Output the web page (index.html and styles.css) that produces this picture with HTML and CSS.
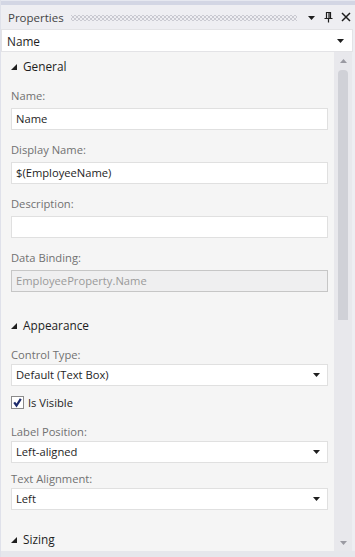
FILE: index.html
```html
<!DOCTYPE html>
<html lang="en">
<head>
  <meta charset="UTF-8">
  <title>Properties</title>
  <link rel="stylesheet" href="styles.css">
</head>
<body>
  <div class="panel">
    <div class="top-strip"></div>

    <div class="title-bar">
      <span class="title">Properties</span>
      <span class="grip"></span>
      <span class="title-icons">
        <svg width="9" height="6" viewBox="0 0 9 6"><polygon points="1,1 8,1 4.5,5" fill="#1e1e1e"/></svg>
        <svg width="9" height="12" viewBox="0 0 9 12"><path d="M2.5 1.5h4v6h-4zM5 1.5v6M0.5 7.5h8M4.5 7.5v4" fill="none" stroke="#1e1e1e" stroke-width="1.2"/></svg>
        <svg width="10" height="10" viewBox="0 0 10 10"><path d="M1 1L9 9M9 1L1 9" stroke="#1e1e1e" stroke-width="1.5"/></svg>
      </span>
    </div>

    <div class="object-select">
      <span>Name</span>
      <svg width="9" height="6" viewBox="0 0 9 6"><polygon points="1,1 8,1 4.5,5" fill="#1e1e1e"/></svg>
    </div>

    <div class="body">
      <div class="content">
        <div class="section">
          <div class="section-head">
            <svg width="6" height="6" viewBox="0 0 6 6"><polygon points="6,0 6,6 0,6" fill="#1e1e1e"/></svg>
            General
          </div>
          <div class="field">
            <label>Name:</label>
            <div class="input">Name</div>
          </div>
          <div class="field">
            <label>Display Name:</label>
            <div class="input">$(EmployeeName)</div>
          </div>
          <div class="field">
            <label>Description:</label>
            <div class="input"></div>
          </div>
          <div class="field">
            <label>Data Binding:</label>
            <div class="input disabled">EmployeeProperty.Name</div>
          </div>
        </div>

        <div class="section">
          <div class="section-head">
            <svg width="6" height="6" viewBox="0 0 6 6"><polygon points="6,0 6,6 0,6" fill="#1e1e1e"/></svg>
            Appearance
          </div>
          <div class="field select-field">
            <label>Control Type:</label>
            <div class="select">
              <span>Default (Text Box)</span>
              <svg width="9" height="6" viewBox="0 0 9 6"><polygon points="1,1 8,1 4.5,5" fill="#1e1e1e"/></svg>
            </div>
          </div>
          <div class="check-row">
            <svg class="checkbox" width="13" height="13" viewBox="0 0 13 13">
              <rect x="0.5" y="0.5" width="12" height="12" fill="#fff" stroke="#8a8a8a"/>
              <path d="M3.2 6.3L5.5 9.5L9.8 2.8" fill="none" stroke="#1c2a6b" stroke-width="2.2"/>
            </svg>
            <span>Is Visible</span>
          </div>
          <div class="field select-field">
            <label>Label Position:</label>
            <div class="select">
              <span>Left-aligned</span>
              <svg width="9" height="6" viewBox="0 0 9 6"><polygon points="1,1 8,1 4.5,5" fill="#1e1e1e"/></svg>
            </div>
          </div>
          <div class="field select-field">
            <label>Text Alignment:</label>
            <div class="select">
              <span>Left</span>
              <svg width="9" height="6" viewBox="0 0 9 6"><polygon points="1,1 8,1 4.5,5" fill="#1e1e1e"/></svg>
            </div>
          </div>
        </div>

        <div class="section">
          <div class="section-head">
            <svg width="6" height="6" viewBox="0 0 6 6"><polygon points="6,0 6,6 0,6" fill="#1e1e1e"/></svg>
            Sizing
          </div>
        </div>
      </div>

      <div class="scrollbar">
        <div class="scroll-btn">
          <svg width="7" height="4" viewBox="0 0 7 4"><polygon points="0,4 7,4 3.5,0" fill="#9a9aa2"/></svg>
        </div>
        <div class="track">
          <div class="thumb"></div>
        </div>
        <div class="scroll-btn">
          <svg width="7" height="4" viewBox="0 0 7 4"><polygon points="0,0 7,0 3.5,4" fill="#9a9aa2"/></svg>
        </div>
      </div>
    </div>

    <div class="bottom-strip"></div>
  </div>
</body>
</html>
```

FILE: styles.css
```css
:root {
  --frame: #eeeef2;
  --strip: #d3d6e4;
  --content-bg: #f5f5f5;
  --text: #1e1e1e;
  --label: #717171;
  --input-border: #e0e0e0;
}

* {
  box-sizing: border-box;
}

body {
  margin: 0;
  font-family: "Open Sans", "Noto Sans", sans-serif;
  font-size: 11.2px;
  color: var(--text);
  background: var(--frame);
}

.panel {
  width: 355px;
  height: 557px;
  display: flex;
  flex-direction: column;
  background: var(--frame);
  border-left: 1px solid #dfe1ea;
  overflow: hidden;
}

.top-strip {
  height: 5px;
  background: var(--strip);
  border-top: 1px solid #e6e8f0;
}

.title-bar {
  height: 24px;
  display: flex;
  align-items: center;
  padding: 0 4px 0 7px;
}

.title {
  color: #444;
  font-size: 11.5px;
}

.grip {
  flex: 1;
  height: 6px;
  margin: 1px 10px 0 7px;
  background-image:
    radial-gradient(circle, #b6b6c0 0.6px, transparent 0.9px),
    radial-gradient(circle, #b6b6c0 0.6px, transparent 0.9px);
  background-size: 4px 4px;
  background-position: 0 0, 2px 2px;
}

.title-icons {
  display: flex;
  align-items: center;
  gap: 8px;
}

.title-icons svg:first-child {
  margin-top: 1px;
}

.object-select {
  height: 23px;
  margin-right: 2px;
  display: flex;
  align-items: center;
  justify-content: space-between;
  padding: 0 7px 0 5px;
  background: #fff;
  border: 1px solid #e3e3e6;
  font-size: 11.8px;
}

.body {
  flex: 1;
  display: flex;
  min-height: 0;
  margin-right: 3px;
}

.content {
  flex: 1;
  background: var(--content-bg);
  padding: 6px 6px 0 10px;
  overflow: hidden;
}

.section {
  display: flow-root;
}

.section + .section {
  margin-top: 13px;
}

.section-head {
  height: 16px;
  display: flex;
  align-items: center;
  gap: 6px;
  margin-bottom: 14px;
  font-size: 11.8px;
}

.section-head svg {
  margin-top: 2px;
}

.field {
  display: flex;
  flex-direction: column;
  gap: 4px;
  margin-bottom: 12px;
}

.field label {
  height: 16px;
  line-height: 16px;
  color: var(--label);
}

.input,
.select {
  height: 22px;
  line-height: 20px;
  padding: 0 4px;
  background: #fff;
  border: 1px solid var(--input-border);
}

.input.disabled {
  background: #efeff0;
  border-color: #c6c6c6;
  color: #9a9a9a;
}

.select-field {
  gap: 1px;
  margin-bottom: 8px;
}

.select {
  display: flex;
  align-items: center;
  justify-content: space-between;
  padding-right: 6px;
}

.check-row {
  height: 16px;
  display: flex;
  align-items: center;
  gap: 4px;
  margin-bottom: 14px;
}

.scrollbar {
  width: 18px;
  display: flex;
  flex-direction: column;
  background: #e8e8ec;
}

.scroll-btn {
  height: 17px;
  display: flex;
  align-items: center;
  justify-content: center;
}

.track {
  flex: 1;
  padding: 1px 4px 0;
}

.thumb {
  height: 250px;
  background: #d0d1d7;
  border-radius: 4px 4px 0 0;
}

.bottom-strip {
  height: 6px;
  background: #e6e7ec;
}
```
